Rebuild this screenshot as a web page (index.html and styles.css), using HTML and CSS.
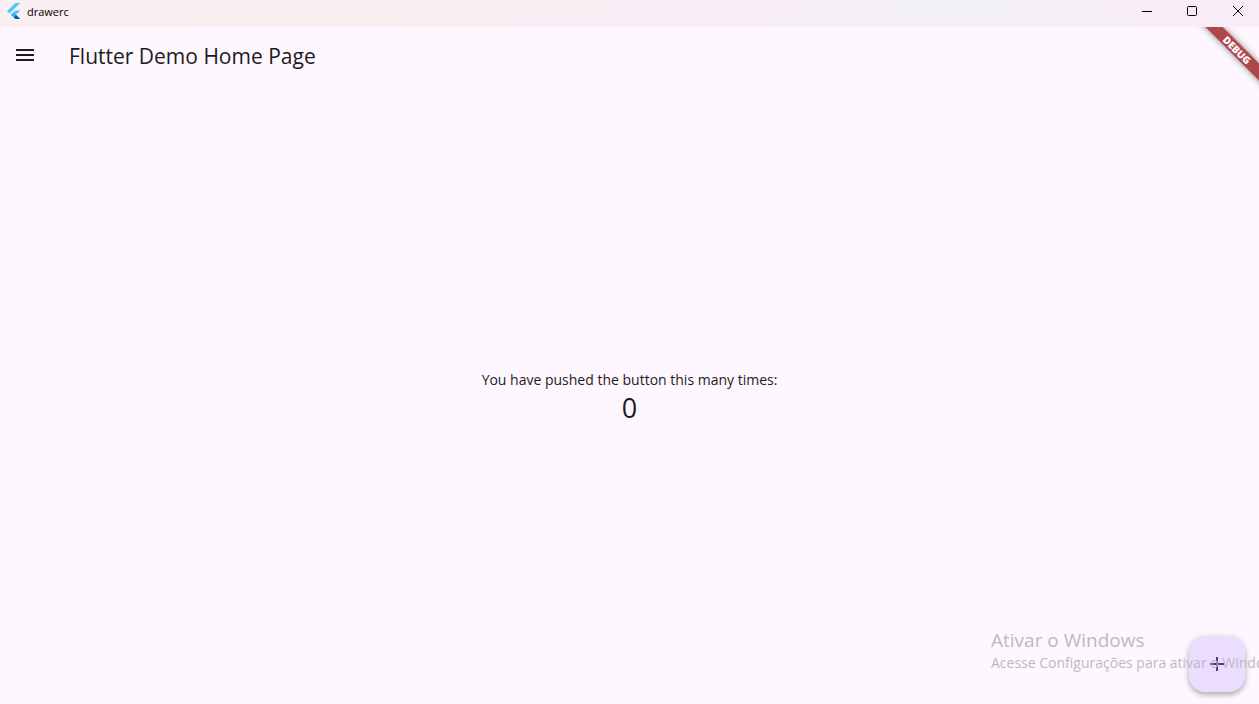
FILE: index.html
```html
<!DOCTYPE html>
<html lang="en">
<head>
  <meta charset="utf-8">
  <meta name="viewport" content="width=device-width, initial-scale=1">
  <title>drawerc</title>
  <link rel="stylesheet" href="styles.css">
</head>
<body class="window">
  <header class="titlebar">
    <svg class="titlebar-logo" viewBox="0 0 14 17" aria-hidden="true">
      <path fill="#54c5f8" d="M8.3 0H13.2L2.6 10.6L0 8.2Z"/>
      <path fill="#54c5f8" d="M8.3 7.6H13.2L9 11.8L6.6 14.2L4 11.8Z"/>
      <path fill="#01579b" d="M6.6 14.2L9 11.8L13.2 16H8.4Z"/>
      <path fill="#29b6f6" d="M4 11.8L6.5 9.4L9 11.8L6.6 14.2Z"/>
    </svg>
    <span class="titlebar-name">drawerc</span>
    <div class="window-controls">
      <button class="window-button" type="button" aria-label="Minimize">
        <svg class="window-icon" viewBox="0 0 12 12"><path d="M1 6.5H11"/></svg>
      </button>
      <button class="window-button" type="button" aria-label="Maximize">
        <svg class="window-icon" viewBox="0 0 12 12"><rect x="1.5" y="1.5" width="9" height="9" rx="1"/></svg>
      </button>
      <button class="window-button" type="button" aria-label="Close">
        <svg class="window-icon" viewBox="0 0 12 12"><path d="M2 1L12 11M12 1L2 11"/></svg>
      </button>
    </div>
  </header>
  <div class="app">
    <header class="appbar">
      <button class="menu-button" type="button" aria-label="Open navigation menu">
        <svg class="icon" viewBox="0 0 24 24"><path d="M3 18h18v-2H3v2zm0-5h18v-2H3v2zm0-7v2h18V6H3z"/></svg>
      </button>
      <h1 class="appbar-title">Flutter Demo Home Page</h1>
    </header>
    <main class="content">
      <p class="message">You have pushed the button this many times:</p>
      <p class="counter">0</p>
    </main>
    <button class="fab" type="button" aria-label="Increment">
      <svg class="icon" viewBox="0 0 24 24"><path d="M19 13h-6v6h-2v-6H5v-2h6V5h2v6h6v2z"/></svg>
    </button>
    <div class="watermark">
      <p class="watermark-title">Ativar o Windows</p>
      <p class="watermark-text">Acesse Configurações para ativar o Windows.</p>
    </div>
    <div class="debug-banner">DEBUG</div>
  </div>
</body>
</html>
```

FILE: styles.css
```css
* {
  box-sizing: border-box;
}

.window {
  display: flex;
  flex-direction: column;
  min-height: 100vh;
  margin: 0;
  background: #fef7ff;
  color: #1d1b20;
  font-family: "Segoe UI", "Open Sans", "Noto Sans", sans-serif;
}

p,
h1 {
  margin: 0;
}

button {
  display: flex;
  align-items: center;
  justify-content: center;
  padding: 0;
  border: 0;
  background: none;
  color: inherit;
}

.titlebar {
  display: flex;
  align-items: flex-start;
  height: 27px;
  padding-left: 7px;
  background: linear-gradient(90deg, #f9eef1 0%, #f9eff1 30%, #f8edf6 60%, #f3eff7 72%, #f3eff7 80%, #f8edf6 92%, #f8edf6 100%);
  color: #000;
}

.titlebar-logo {
  width: 14px;
  height: 17px;
  margin-top: 3px;
}

.titlebar-name {
  margin-left: 6px;
  font-size: 11px;
  line-height: 24px;
}

.window-controls {
  display: flex;
  margin-left: auto;
}

.window-button {
  width: 45px;
  height: 22px;
}

.window-icon {
  width: 12px;
  height: 12px;
  fill: none;
  stroke: #000;
}

.icon {
  width: 24px;
  height: 24px;
  fill: currentColor;
}

.app {
  position: relative;
  display: flex;
  flex: 1;
  flex-direction: column;
  overflow: hidden;
}

.appbar {
  display: flex;
  align-items: center;
  gap: 20px;
  height: 58px;
}

.menu-button {
  width: 49px;
  height: 48px;
  padding-bottom: 2px;
}

.appbar-title {
  font-size: 21px;
  font-weight: 400;
  line-height: 28px;
}

.content {
  display: flex;
  flex: 1;
  flex-direction: column;
  align-items: center;
  justify-content: center;
  padding-top: 6px;
}

.message {
  font-size: 14px;
  line-height: 20px;
}

.counter {
  font-size: 27px;
  line-height: 36px;
}

.fab {
  position: absolute;
  right: 14px;
  bottom: 12px;
  width: 56px;
  height: 56px;
  border-radius: 16px;
  background: #eaddff;
  box-shadow: 0 3px 5px rgba(0, 0, 0, 0.24), 0 1px 8px rgba(0, 0, 0, 0.1);
  color: #4f378b;
}

.watermark {
  position: absolute;
  bottom: 31px;
  left: calc(100% - 268px);
  color: #bdb9be;
  white-space: nowrap;
  pointer-events: none;
}

.watermark-title {
  font-size: 19px;
  line-height: 26px;
}

.watermark-text {
  font-size: 14px;
  line-height: 20px;
}

.debug-banner {
  position: absolute;
  top: 17px;
  right: -28px;
  width: 100px;
  background: #ae474b;
  box-shadow: 0 0 6px rgba(0, 0, 0, 0.5);
  color: #fff;
  font-size: 10px;
  font-weight: 800;
  line-height: 12px;
  text-align: center;
  transform: rotate(45deg);
}
```
